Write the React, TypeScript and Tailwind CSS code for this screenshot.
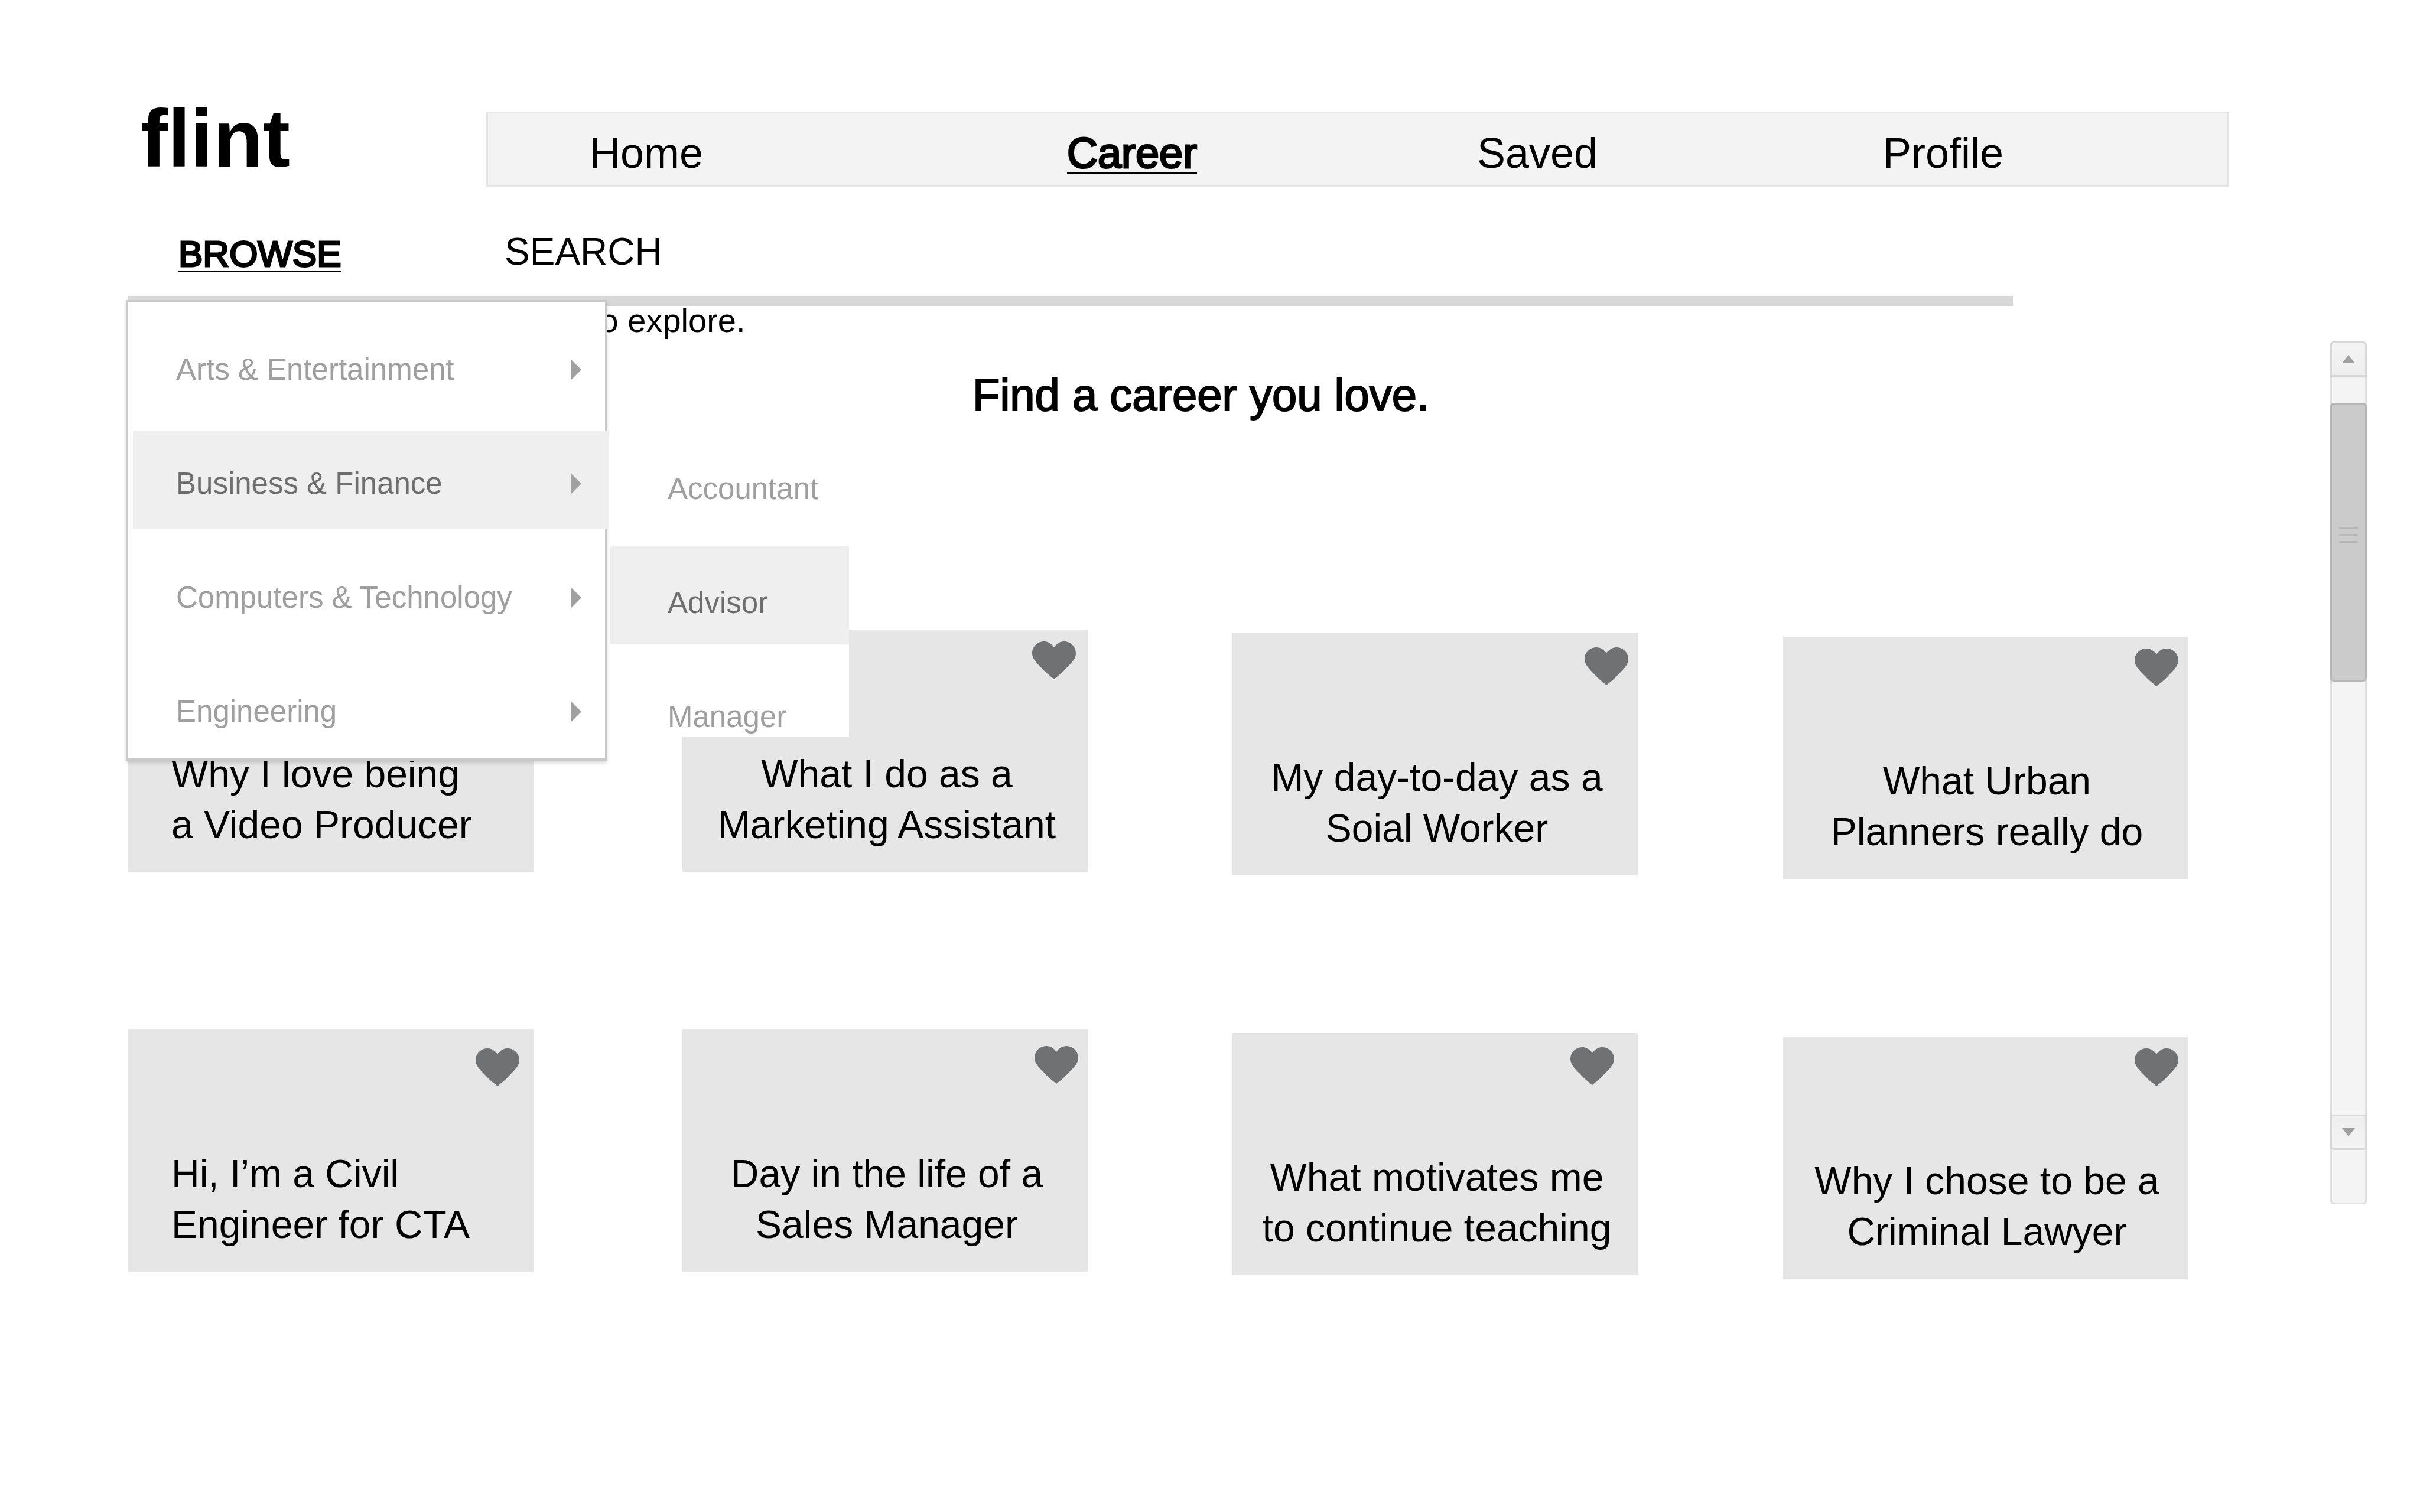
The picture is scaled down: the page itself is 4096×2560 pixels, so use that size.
import React from "react";

const navItems = ["Home", "Career", "Saved", "Profile"];
const categories = ["Arts & Entertainment", "Business & Finance", "Computers & Technology", "Engineering"];
const roles = ["Accountant", "Advisor", "Manager"];

type Story = { lines: [string, string]; align: string; drop: string; heart: string };

const left = "pl-[73px] text-left";
const center = "pl-[6px] text-center";

const stories: Story[] = [
  { lines: ["Why I love being", "a Video Producer"], align: left, drop: "mt-0", heart: "top-5 right-5" },
  { lines: ["What I do as a", "Marketing Assistant"], align: center, drop: "mt-0", heart: "top-5 right-5" },
  { lines: ["My day-to-day as a", "Soial Worker"], align: center, drop: "mt-1.5", heart: "top-6 right-4" },
  { lines: ["What Urban", "Planners really do"], align: center, drop: "mt-3", heart: "top-5 right-4" },
  { lines: ["Hi, I’m a Civil", "Engineer for CTA"], align: left, drop: "mt-0", heart: "top-8 right-6" },
  { lines: ["Day in the life of a", "Sales Manager"], align: center, drop: "mt-0", heart: "top-7 right-4" },
  { lines: ["What motivates me", "to continue teaching"], align: center, drop: "mt-1.5", heart: "top-6 right-10" },
  { lines: ["Why I chose to be a", "Criminal Lawyer"], align: center, drop: "mt-3", heart: "top-5 right-4" },
];

function Heart() {
  return (
    <svg viewBox="0 0 74 64" className="block h-16 w-[74px] fill-[#707173]" aria-hidden="true">
      <path d="M37 64C31 59 23 53 16 45C7 36 0 29 0 20C0 9 9 0 20 0C27 0 33 4 37 10C41 4 47 0 54 0C65 0 74 9 74 20C74 29 67 36 58 45C51 53 43 59 37 64Z" />
    </svg>
  );
}

function Card({ story }: { story: Story }) {
  return (
    <article className={`relative flex h-[410px] w-[686px] flex-col justify-end bg-[#e6e6e6] pb-[37px] ${story.drop}`}>
      <button type="button" aria-label={`Save ${story.lines.join(" ")}`} className={`absolute ${story.heart}`}>
        <Heart />
      </button>
      <h2 className={`text-[66px] leading-[86px] whitespace-nowrap ${story.align}`}>
        {story.lines[0]}
        <br />
        {story.lines[1]}
      </h2>
    </article>
  );
}

function Scrollbar() {
  return (
    <div className="flex h-[1461px] w-[62px] shrink-0 flex-col rounded-[6px] bg-[#f4f4f4] shadow-[inset_0_0_0_3px_#e0e0e0]">
      <button type="button" aria-label="Scroll up" className="flex h-[60px] items-center justify-center rounded-t-[6px] border-3 border-[#d8d8d8] bg-linear-to-b from-[#f4f4f4] to-[#eeeeee]">
        <svg viewBox="0 0 22 14" className="h-3.5 w-[22px] fill-[#a0a0a0]"><path d="M11 0L22 14H0Z" /></svg>
      </button>
      <div className="mt-11 flex h-[472px] flex-col items-center justify-center gap-2 rounded-[6px] border-3 border-[#b6b6b6] bg-[#cbcbcb] pb-6">
        <span className="h-1 w-8 rounded-full bg-[#b6b6b6]" />
        <span className="h-1 w-8 rounded-full bg-[#b6b6b6]" />
        <span className="h-1 w-8 rounded-full bg-[#b6b6b6]" />
      </div>
      <button type="button" aria-label="Scroll down" className="mt-auto mb-[92px] flex h-[60px] items-center justify-center rounded-b-[6px] border-3 border-[#d8d8d8] bg-linear-to-b from-[#eeeeee] to-[#f4f4f4]">
        <svg viewBox="0 0 22 14" className="h-3.5 w-[22px] fill-[#a0a0a0]"><path d="M0 0H22L11 14Z" /></svg>
      </button>
    </div>
  );
}

function CategoryMenu() {
  return (
    <div className="absolute top-[6px] left-[-3px] z-10 h-[780px] w-[813px] border-3 border-b-4 border-[#cacaca] bg-white pt-[25px] pl-2 shadow-[0_4px_6px_rgba(0,0,0,0.15)]">
      <ul className="-mr-[6px] flex flex-col gap-[26px]">
        {categories.map((name, i) => (
          <li key={name}>
            <button
              type="button"
              className={`flex h-[167px] w-full items-center justify-between pt-3 pr-[46px] pl-[73px] text-[51px] leading-[72px] whitespace-nowrap ${
                i === 1 ? "bg-[#efefef] text-[#6e6e6e]" : "text-[#9f9f9f]"
              }`}
            >
              {name}
              <svg viewBox="0 0 18 36" className="h-9 w-[18px] fill-[#a0a0a0]"><path d="M0 0L18 18L0 36Z" /></svg>
            </button>
          </li>
        ))}
      </ul>
      <ul className="absolute top-[220px] left-[816px] flex h-[516px] w-[404px] flex-col gap-[26px] bg-white">
        {roles.map((name, i) => (
          <li key={name} className="h-[167px]">
            <button
              type="button"
              className={`flex h-[167px] w-full items-center pt-[26px] pl-[97px] text-[51px] leading-[72px] ${
                i === 1 ? "bg-[#efefef] text-[#6e6e6e]" : "text-[#9f9f9f]"
              }`}
            >
              {name}
            </button>
          </li>
        ))}
      </ul>
    </div>
  );
}

export default function App() {
  return (
    <div className="min-h-screen bg-white font-['Liberation_Sans',Arial,sans-serif] text-black">
      <header className="flex items-start pt-[189px] pr-[323px] pl-[238px]">
        <a href="#home" className="-mt-[35px] w-[585px] shrink-0 text-[138px] leading-[160px] font-bold">
          flint
        </a>
        <nav className="grid h-[128px] flex-1 grid-cols-[808fr_694fr_687fr_583fr] items-center border-3 border-[#e6e6e6] bg-[#f3f3f3] pt-3 pl-[172px]">
          {navItems.map((name) => (
            <a
              key={name}
              href={`#${name.toLowerCase()}`}
              className={`justify-self-start text-[72px] leading-[80px] ${
                name === "Career" ? "underline decoration-2 underline-offset-[8px] [-webkit-text-stroke:3px_#000]" : ""
              }`}
            >
              {name}
            </a>
          ))}
        </nav>
      </header>
      <div className="mt-[73px] flex items-start pl-[302px]">
        <a href="#browse" className="mt-1 w-[552px] text-[62px] leading-[72px] underline decoration-2 underline-offset-[8px] [-webkit-text-stroke:3px_#000]">
          BROWSE
        </a>
        <a href="#search" className="text-[64px] leading-[72px]">SEARCH</a>
      </div>
      <main className="relative mt-9 flex items-start justify-between pr-[90px] pl-[217px]">
        <div className="relative min-w-0 flex-1">
          <hr className="mr-[537px] h-4 border-0 bg-[#d8d8d8]" />
          <CategoryMenu />
          <p className="ml-[783px] text-[56px] leading-[50px]">to explore.</p>
          <h1 className="mt-[57px] ml-[1429px] text-[76px] leading-[88px] [-webkit-text-stroke:2px_#000]">Find a career you love.</h1>
          <section className="mt-[353px] mr-[241px] grid grid-cols-[938fr_931fr_931fr_686fr] items-start gap-y-[255px]">
            {stories.map((s) => (
              <Card key={s.lines[0]} story={s} />
            ))}
          </section>
        </div>
        <div className="mt-[76px]">
          <Scrollbar />
        </div>
      </main>
    </div>
  );
}
